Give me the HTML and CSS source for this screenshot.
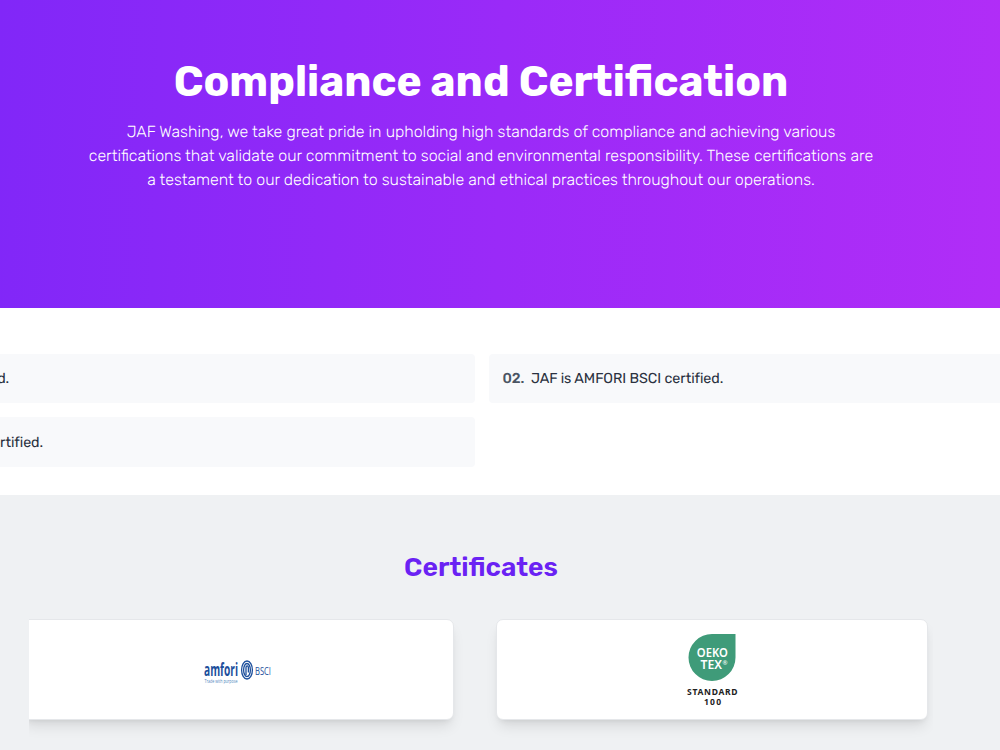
FILE: index.html
```html
<!DOCTYPE html>
<html lang="en">
<head>
	<meta charset="utf-8">
	<meta name="viewport" content="width=device-width, initial-scale=1">
	<title>Compliance and Certification</title>

	<link rel="stylesheet" href="styles.css">
</head>
<body>

	<section class="banner">
		<h1>Compliance and Certification</h1>
		<p class="intro">JAF Washing, we take great pride in upholding high standards of compliance and achieving various<br>
			certifications that validate our commitment to social and environmental responsibility. These certifications are<br>
			a testament to our dedication to sustainable and ethical practices throughout our operations.</p>
	</section>

	<section class="points">
		<div class="points-grid">
			<div class="point"><b>01.</b><span>JAF is GOTS certified.</span></div>
			<div class="point"><b>02.</b><span>JAF is AMFORI BSCI certified.</span></div>
			<div class="point"><b>03.</b><span>JAF is OEKO-TEX certified.</span></div>
		</div>
	</section>

	<section class="certificates">
		<h2>Certificates</h2>
		<div class="slider">
			<div class="track">
				<div class="card">
					<svg class="amfori" width="68" height="34" viewBox="0 0 68 34">
						<text x="0" y="23.500" textLength="34" lengthAdjust="spacingAndGlyphs" class="amfori-name">amfori</text>
						<g fill="none" stroke="#1d4f9c" stroke-width="1.300">
							<ellipse cx="43" cy="18" rx="5.400" ry="9"/>
							<ellipse cx="43" cy="18" rx="3.400" ry="6.500"/>
							<path d="M42 23V16Q42 13.800 43.200 13.800T44.400 16V20.500"/>
						</g>
						<text x="51" y="22.500" textLength="16" lengthAdjust="spacingAndGlyphs" class="amfori-bsci">BSCI</text>
						<text x="0.500" y="31" textLength="33" lengthAdjust="spacingAndGlyphs" class="amfori-tag">Trade with purpose</text>
					</svg>
				</div>
				<div class="card">
					<svg class="oeko" width="60" height="80" viewBox="0 0 60 80">
						<path d="M53.500 5V28.500A23.500 23.500 0 1 1 30 5Z" fill="#3f9b79"/>
						<text x="14.800" y="27.500" textLength="31" lengthAdjust="spacingAndGlyphs" class="oeko-name">OEKO</text>
						<text x="18.500" y="39.500" textLength="21.500" lengthAdjust="spacingAndGlyphs" class="oeko-name">TEX</text>
						<text x="40.500" y="36" class="oeko-reg">®</text>
						<text x="5" y="66" textLength="50.500" class="oeko-std">STANDARD</text>
						<text x="22" y="75.500" textLength="17" class="oeko-std">100</text>
					</svg>
				</div>
			</div>
		</div>
	</section>

</body>
</html>
```
FILE: styles.css
```css
*{
	margin: 0;
	padding: 0;
	box-sizing: border-box;
}
body{
	font-family: Rubik, Roboto, sans-serif;
	background: white;
	overflow: hidden;
	height: 750px;
}
.banner{
	height: 307.5px;
	padding: 57px 38px 0 0;
	text-align: center;
	color: white;
	background: linear-gradient(92deg, #8127f8, #9a2af8 50%, #b12df7);
}
.banner h1{
	font-size: 42.4px;
	line-height: 50px;
	font-weight: 700;
	white-space: nowrap;
}
.intro{
	margin-top: 13px;
	font-size: 15.96px;
	line-height: 24px;
	font-weight: 300;
	white-space: nowrap;
	text-rendering: geometricPrecision;
}
.points{
	display: flex;
	justify-content: center;
	height: 187.5px;
	padding: 46px 37px 28px 0;
	overflow: hidden;
}
.points-grid{
	display: grid;
	grid-template-columns: 1fr 1fr;
	gap: 14px;
	width: 1309px;
	flex-shrink: 0;
}
.point{
	display: flex;
	align-items: center;
	height: 49.5px;
	padding: 0 14px;
	border-radius: 4px;
	background: #f8f9fb;
	color: #2a3140;
	font-size: 14.3px;
	letter-spacing: -.07px;
	white-space: nowrap;
	text-rendering: geometricPrecision;
}
.point b{
	margin-right: 6.5px;
	color: #4b5563;
	font-weight: 500;
}
.certificates{
	height: 255px;
	padding: 56px 38px 0 0;
	background: #eff1f3;
	overflow: hidden;
}
.certificates h2{
	text-align: center;
	font-size: 26.5px;
	line-height: 32px;
	font-weight: 600;
	color: #6a22f3;
}
.slider{
	width: 904px;
	height: 180px;
	margin: 29px 0 0 29px;
	padding-top: 7px;
	overflow: hidden;
}
.track{
	display: flex;
	gap: 42px;
	margin-left: -7px;
}
.card{
	display: flex;
	justify-content: center;
	align-items: center;
	flex: none;
	width: 432px;
	height: 100.5px;
	background: white;
	border: 1px solid #e5e7ea;
	border-radius: 7px;
	box-shadow: 0 9px 14px -3px rgba(0,0,0,.1), 0 4px 6px -4px rgba(0,0,0,.1);
}
.amfori-name{
	font: 700 17px "Open Sans", sans-serif;
	fill: #1d4f9c;
}
.amfori-bsci{
	font: 400 11px "Open Sans", sans-serif;
	fill: #1d4f9c;
}
.amfori-tag{
	font: 400 5px "Open Sans", sans-serif;
	fill: #4f86bd;
}
.oeko-name{
	font: 600 13px "Noto Sans", sans-serif;
	fill: white;
}
.oeko-reg{
	font: 400 6px "Noto Sans", sans-serif;
	fill: white;
}
.oeko-std{
	font: 700 8.5px "Noto Sans", sans-serif;
	fill: #222;
}
```
